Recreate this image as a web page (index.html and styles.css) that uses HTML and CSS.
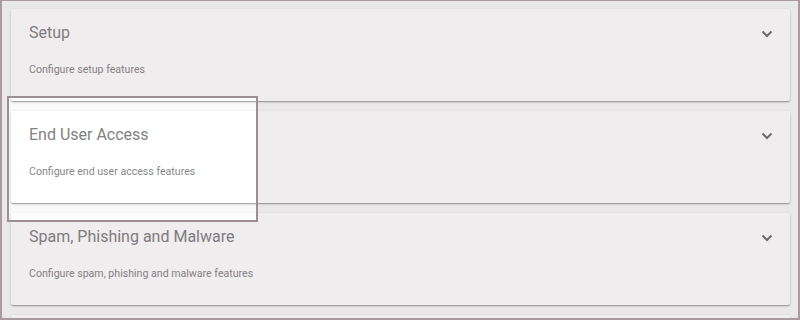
FILE: index.html
```html
<!DOCTYPE html>
<html lang="en">

<head>
    <meta charset="UTF-8">
    <meta name="viewport" content="width=device-width, initial-scale=1.0">
    <title>Settings</title>
    <link rel="stylesheet" href="styles.css">
</head>

<body>
    <div class="frame">
        <div class="panel">
            <div class="panel_head">
                <div class="panel_title">Setup</div>
                <svg class="chevron" width="12" height="8" viewBox="0 0 12 8"><path d="M1.5 1.5 L6 6 L10.5 1.5" /></svg>
            </div>
            <div class="panel_desc">Configure setup features</div>
        </div>
        <div class="panel">
            <div class="panel_head">
                <div class="panel_title">End User Access</div>
                <svg class="chevron" width="12" height="8" viewBox="0 0 12 8"><path d="M1.5 1.5 L6 6 L10.5 1.5" /></svg>
            </div>
            <div class="panel_desc">Configure end user access features</div>
        </div>
        <div class="panel">
            <div class="panel_head">
                <div class="panel_title">Spam, Phishing and Malware</div>
                <svg class="chevron" width="12" height="8" viewBox="0 0 12 8"><path d="M1.5 1.5 L6 6 L10.5 1.5" /></svg>
            </div>
            <div class="panel_desc">Configure spam, phishing and malware features</div>
        </div>
        <!-- next panel, only its top edge is in view -->
        <div class="panel"></div>

        <!-- tour spotlight over the second panel -->
        <div class="spotlight"></div>
    </div>
</body>

</html>
```

FILE: styles.css
```css
* {
    box-sizing: border-box;
}

body {
    margin: 0;
    font-family: Roboto, "Liberation Sans", sans-serif;
}

.frame {
    position: relative;
    width: 800px;
    height: 320px;
    overflow: hidden;
    background: #fafafa;
    padding: 9px 10px 0 11px;
}

.frame::after {
    content: "";
    position: absolute;
    left: 0;
    top: 0;
    right: 0;
    bottom: 0;
    border: 2px solid #a89ba1;
    border-top-width: 1px;
    pointer-events: none;
}

.panel {
    height: 92px;
    margin-bottom: 10px;
    background: #fff;
    border-radius: 2px;
    box-shadow: 0 1px 3px rgba(0, 0, 0, 0.2), 0 1px 1px rgba(0, 0, 0, 0.14), 0 2px 1px -1px rgba(0, 0, 0, 0.12);
    padding: 15px 18px 0 18px;
}

.panel_head {
    display: flex;
    justify-content: space-between;
    align-items: center;
    height: 17px;
}

.panel_title {
    font-size: 16px;
    line-height: 17px;
    color: #828282;
}

.chevron {
    margin-right: -1px;
    margin-top: 2px;
}

.chevron path {
    fill: none;
    stroke: #707070;
    stroke-width: 2;
}

.panel_desc {
    margin-top: 21px;
    font-size: 10.6px;
    line-height: 16px;
    color: #888;
}

.spotlight {
    position: absolute;
    left: 7px;
    top: 96px;
    width: 251px;
    height: 126px;
    border: 2px solid #9b8e95;
    box-shadow: 0 0 0 2000px rgba(110, 80, 95, 0.1);
}
```
